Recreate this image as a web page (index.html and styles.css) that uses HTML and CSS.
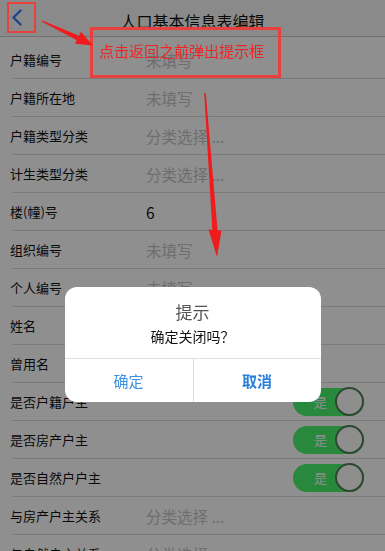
FILE: index.html
```html
<!DOCTYPE html>
<html lang="zh-CN">
<head>
<meta charset="utf-8">
<title>人口基本信息表编辑</title>
<link rel="stylesheet" href="styles.css">
</head>
<body>
<div class="page">
  <header class="nav">
    <span class="back">
      <svg width="12" height="17" viewBox="0 0 12 17"><polyline points="9.5,1.5 2.5,8.5 9.5,15.5" fill="none" stroke="#2f7cf6" stroke-width="2.4" stroke-linecap="round" stroke-linejoin="round"/></svg>
    </span>
    <h1 class="title">人口基本信息表编辑</h1>
  </header>
  <ul class="form">
    <li class="row"><span class="label">户籍编号</span><span class="value hint">未填写</span></li>
    <li class="row"><span class="label">户籍所在地</span><span class="value hint">未填写</span></li>
    <li class="row"><span class="label">户籍类型分类</span><span class="value hint">分类选择 ...</span></li>
    <li class="row"><span class="label">计生类型分类</span><span class="value hint">分类选择 ...</span></li>
    <li class="row"><span class="label">楼(幢)号</span><span class="value">6</span></li>
    <li class="row"><span class="label">组织编号</span><span class="value hint">未填写</span></li>
    <li class="row"><span class="label">个人编号</span><span class="value hint">未填写</span></li>
    <li class="row"><span class="label">姓名</span><span class="value"></span></li>
    <li class="row"><span class="label">曾用名</span><span class="value"></span></li>
    <li class="row"><span class="label">是否户籍户主</span><span class="switch"><span class="switch-text">是</span><span class="knob"></span></span></li>
    <li class="row"><span class="label">是否房产户主</span><span class="switch"><span class="switch-text">是</span><span class="knob"></span></span></li>
    <li class="row"><span class="label">是否自然户户主</span><span class="switch"><span class="switch-text">是</span><span class="knob"></span></span></li>
    <li class="row"><span class="label">与房产户主关系</span><span class="value hint">分类选择 ...</span></li>
    <li class="row"><span class="label">与自然户主关系</span><span class="value hint">分类选择 ...</span></li>
  </ul>
</div>

<div class="mask">
  <div class="dialog">
    <div class="dialog-title">提示</div>
    <div class="dialog-msg">确定关闭吗？</div>
    <div class="dialog-actions">
      <span class="btn">确定</span>
      <span class="btn btn-strong">取消</span>
    </div>
  </div>
</div>

<div class="notes">
  <div class="mark-back"></div>
  <div class="note-box">点击返回之前弹出提示框</div>
  <svg class="arrows" width="385" height="551" viewBox="0 0 385 551">
    <polygon points="41.7,21.6 42.3,20.4 79.1,35.8 76.9,40.3" fill="#ee1c1c"/>
    <polygon points="93,45.5 75,43.8 81,31.8" fill="#ee1c1c"/>
    <polygon points="204.2,93 205.8,93 217.6,231 212.4,231" fill="#ee1c1c"/>
    <polygon points="208.5,229.5 221.5,230.5 217,257" fill="#ee1c1c"/>
  </svg>
</div>
</body>
</html>
```

FILE: styles.css
```css
* { box-sizing: border-box; }

html, body {
  margin: 0;
  padding: 0;
}

body {
  width: 385px;
  height: 551px;
  overflow: hidden;
  background: #ffffff;
  font-family: "Noto Sans CJK SC", "Noto Sans", "Liberation Sans", sans-serif;
  color: #1a1a1a;
}

.page {
  width: 385px;
}

.nav {
  height: 37px;
  display: grid;
  grid-template-columns: 1fr auto 1fr;
  align-items: start;
  background: #f6f6f6;
  border-bottom: 1px solid #c9c9c9;
}

.back {
  padding-left: 11px;
  padding-top: 9px;
  display: flex;
}

.title {
  margin: 0;
  padding-top: 11px;
  font-size: 16px;
  line-height: 20px;
  font-weight: normal;
  color: #111;
}

.form {
  list-style: none;
  margin: 4px 0 0 0;
  padding: 0;
}

.row {
  height: 38px;
  margin-left: 13px;
  display: flex;
  align-items: center;
  border-bottom: 1px solid #d9d9d9;
}

.label {
  flex: 0 0 136px;
  margin-left: -3px;
  font-size: 13px;
  line-height: 18px;
  color: #111;
}

.value {
  font-size: 15.5px;
  line-height: 20px;
  color: #111;
}

.value.hint {
  color: #c4c4c4;
}

.switch {
  margin-left: auto;
  margin-right: 21px;
  width: 71px;
  height: 28px;
  border-radius: 14px;
  background: #48f46d;
  display: flex;
  align-items: center;
  justify-content: space-between;
  padding-left: 21px;
}

.switch-text {
  font-size: 13px;
  line-height: 16px;
  color: #ffffff;
}

.knob {
  width: 29px;
  height: 29px;
  border-radius: 50%;
  background: #fefefe;
  border: 2px solid #52805a;
}

.mask {
  position: fixed;
  inset: 0;
  background: rgba(0, 0, 0, 0.44);
  display: flex;
  justify-content: center;
  align-items: flex-start;
  padding-top: 287px;
}

.dialog {
  width: 256px;
  background: #ffffff;
  border-radius: 12px;
  overflow: hidden;
  text-align: center;
}

.dialog-title {
  padding-top: 14px;
  font-size: 17px;
  line-height: 22px;
  color: #555;
}

.dialog-msg {
  padding-top: 3px;
  padding-bottom: 12px;
  font-size: 14px;
  line-height: 20px;
  color: #111;
}

.dialog-actions {
  display: grid;
  grid-template-columns: 1fr 1fr;
  border-top: 1px solid #dedede;
}

.btn {
  height: 43px;
  display: flex;
  align-items: center;
  justify-content: center;
  font-size: 15px;
  color: #3b90e4;
}

.btn-strong {
  border-left: 1px solid #dedede;
  color: #2a7fdc;
  font-weight: bold;
}

.notes {
  position: fixed;
  inset: 0;
  pointer-events: none;
}

.mark-back {
  position: absolute;
  left: 7px;
  top: 2px;
  width: 29px;
  height: 31px;
  border: 2.5px solid #e8403c;
}

.note-box {
  position: absolute;
  left: 90px;
  top: 27px;
  width: 191px;
  height: 51px;
  border: 3px solid #e8403c;
  padding-left: 6px;
  display: flex;
  align-items: center;
  font-size: 15px;
  line-height: 20px;
  color: #ee2424;
  padding-bottom: 4px;
}

.arrows {
  position: absolute;
  left: 0;
  top: 0;
}
```
